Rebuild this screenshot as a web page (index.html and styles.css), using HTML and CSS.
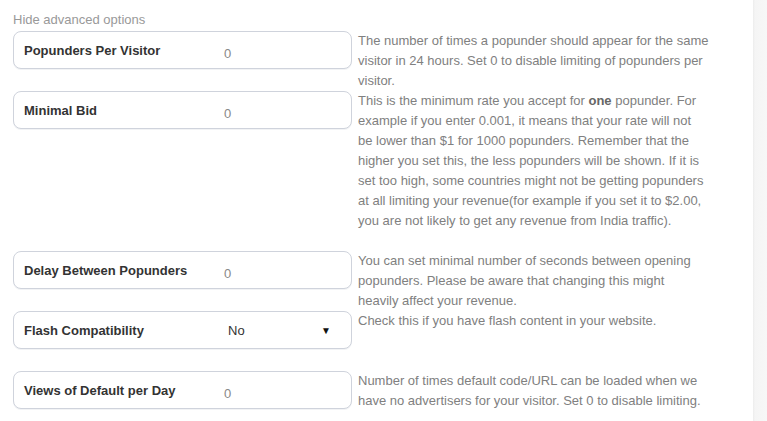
FILE: index.html
```html
<!DOCTYPE html>
<html>
<head>
<meta charset="utf-8">
<link rel="stylesheet" href="styles.css">
</head>
<body>
<div class="page">
  <main class="main">
    <div class="toggle">Hide advanced options</div>
    <div class="row">
      <div class="field"><span class="label">Popunders Per Visitor</span><span class="value">0</span></div>
      <div class="desc">The number of times a popunder should appear for the same visitor in 24 hours. Set 0 to disable limiting of popunders per visitor.</div>
    </div>
    <div class="row">
      <div class="field"><span class="label">Minimal Bid</span><span class="value">0</span></div>
      <div class="desc desc-extra">This is the minimum rate you accept for <b>one</b> popunder. For example if you enter 0.001, it means that your rate will not<br>be lower than $1 for 1000 popunders. Remember that the higher you set this, the less popunders will be shown. If it is set too high, some countries might not be getting popunders at all limiting your revenue(for example if you set it to $2.00, you are not likely to get any revenue from India traffic).</div>
    </div>
    <div class="row">
      <div class="field"><span class="label">Delay Between Popunders</span><span class="value">0</span></div>
      <div class="desc">You can set minimal number of seconds between opening popunders. Please be aware that changing this might<br>heavily affect your revenue.</div>
    </div>
    <div class="row">
      <div class="field"><span class="label">Flash Compatibility</span><span class="select">No</span><span class="arrow">&#9660;</span></div>
      <div class="desc">Check this if you have flash content in your website.</div>
    </div>
    <div class="row">
      <div class="field"><span class="label">Views of Default per Day</span><span class="value">0</span></div>
      <div class="desc">Number of times default code/URL can be loaded when we have no advertisers for your visitor. Set 0 to disable limiting.</div>
    </div>
  </main>
  <aside class="side"></aside>
</div>
</body>
</html>
```

FILE: styles.css
```css
html, body {
  margin: 0;
  padding: 0;
  background: #fff;
}
body {
  font-family: "Liberation Sans", Arial, sans-serif;
  font-size: 13px;
  line-height: 20px;
}
.page {
  display: flex;
  width: 767px;
  height: 421px;
  overflow: hidden;
}
.main {
  flex: 1;
  padding: 10px 0 0 13px;
}
.side {
  width: 14px;
  background: linear-gradient(to right, #ececec 0, #f5f5f5 2px, #f7f7f7 100%);
}
.toggle {
  color: #999;
  margin-bottom: 1px;
}
.row {
  display: flex;
  align-items: flex-start;
}
.field {
  box-sizing: border-box;
  width: 339px;
  height: 38px;
  margin-bottom: 22px;
  border: 1px solid #cfd3dc;
  border-radius: 8px;
  background: #fff;
  box-shadow: 0 1px 0 #f2f3f5;
  display: flex;
  align-items: flex-start;
  padding: 9px 0 0 10px;
  flex-shrink: 0;
  position: relative;
}
.label {
  width: 200px;
  font-weight: bold;
  color: #333;
}
.value {
  color: #888;
  padding-top: 3px;
}
.select {
  color: #333;
  padding-left: 4px;
}
.arrow {
  position: absolute;
  left: 307px;
  top: 9px;
  font-size: 10px;
  color: #111;
}
.desc {
  margin-left: 6px;
  width: 352px;
  color: #808080;
}
.desc b {
  color: #666;
}
.desc-extra {
  margin-bottom: 20px;
}
```
